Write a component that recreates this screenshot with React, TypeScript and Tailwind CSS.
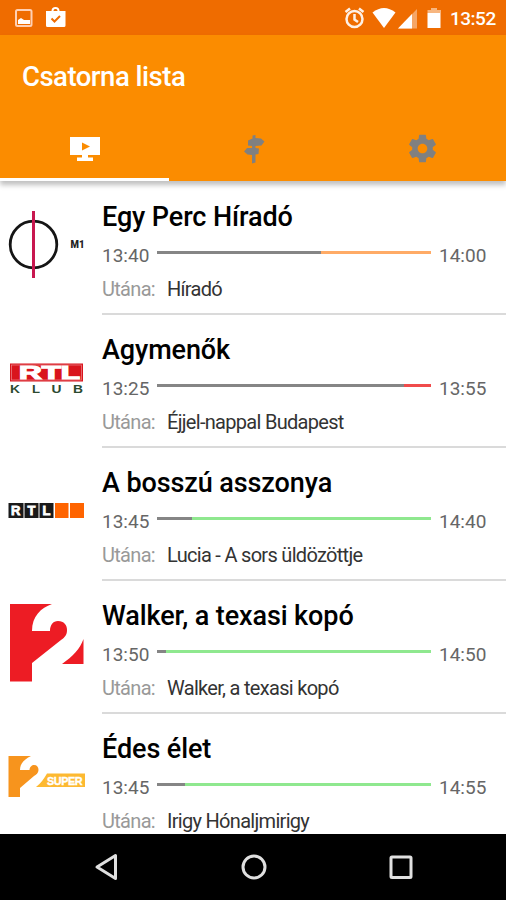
type Channel = {
  logo: () => React.ReactElement;
  title: string;
  start: string;
  end: string;
  next: string;
  progress: number;
  color: string;
};

const M1Logo = () => (
  <svg width="78" height="84" viewBox="0 0 78 84">
    <circle cx="25.5" cy="41.5" r="23.3" fill="none" stroke="#151515" strokeWidth="2.8" />
    <rect x="24" y="8" width="3" height="67" fill="#c8174f" />
    <text x="62.5" y="45" fontSize="10" fontWeight="900" textLength="14" lengthAdjust="spacingAndGlyphs" fill="#222">
      M1
    </text>
  </svg>
);

const RtlKlubLogo = () => (
  <svg width="78" height="84" viewBox="0 0 78 84" fontFamily="Liberation Sans, sans-serif" fontWeight="700">
    <rect x="2" y="27.5" width="73" height="18" fill="#d9141c" />
    <rect x="3.5" y="29" width="70" height="15" fill="none" stroke="#fff" strokeOpacity="0.5" strokeWidth="0.7" />
    <text x="11" y="43" fontSize="17.5" stroke="#fff" strokeWidth="1.2" fill="#fff" textLength="61" lengthAdjust="spacingAndGlyphs">
      RTL
    </text>
    <g fill="#2c4a30" fontSize="10">
      <text x="2" y="56.5" textLength="10" lengthAdjust="spacingAndGlyphs">K</text>
      <text x="24" y="56.5" textLength="8" lengthAdjust="spacingAndGlyphs">L</text>
      <text x="43.5" y="56.5" textLength="10" lengthAdjust="spacingAndGlyphs">U</text>
      <text x="65" y="56.5" textLength="10" lengthAdjust="spacingAndGlyphs">B</text>
    </g>
  </svg>
);

const Rtl2Logo = () => (
  <svg width="78" height="84" viewBox="0 0 78 84" fontFamily="Liberation Sans, sans-serif" fontWeight="700">
    <g fill="#1a1a1a">
      <rect x="0.5" y="34" width="15" height="15" />
      <rect x="16.5" y="34" width="14" height="15" />
      <rect x="31.5" y="34" width="14" height="15" />
    </g>
    <rect x="47" y="34" width="13.5" height="15" fill="#ff6400" />
    <rect x="62" y="34" width="14" height="15" fill="#ff6400" />
    <g fill="#fff" stroke="#fff" strokeWidth="0.8" fontSize="13">
      <text x="3" y="46">R</text>
      <text x="19.5" y="46">T</text>
      <text x="34.5" y="46">L</text>
    </g>
  </svg>
);

const Tv2Logo = () => (
  <svg width="78" height="84" viewBox="0 0 78 84" fill="#ed1c24">
    <path d="M2 2H44C33 6 24 14 24 29H42C42 23 45 19 50 19C56 19 59 23 59 28C59 33 57 35 53 38L24 61V79.500H2Z" />
    <path d="M75.500 37V62H54C65 54 72 47 75.500 37Z" />
  </svg>
);

const SuperTv2Logo = () => (
  <svg className="overflow-visible" width="78" height="84" viewBox="0 0 78 84" fontFamily="Liberation Sans, sans-serif" fontWeight="700">
    <path
      fill="#f7941d"
      d="M0.500 21H23C17 24 12 28 12 35H21.500C21.500 32 24 30 26 30C29 30 30.500 32 30.500 35C30.500 38 28 40 26 41L12 53V62H0.500Z"
    />
    <path fill="#fdb931" d="M39 38.500H77V52H28C33 48 36 44 39 38.500Z" />
    <text x="39" y="49.500" fontSize="10.800" fill="#fff" stroke="#fff" strokeWidth="0.400" letterSpacing="-0.400">
      SUPER
    </text>
  </svg>
);

const channels: Channel[] = [
  { logo: M1Logo, title: "Egy Perc Híradó", start: "13:40", end: "14:00", next: "Híradó", progress: 60, color: "#ffab66" },
  { logo: RtlKlubLogo, title: "Agymenők", start: "13:25", end: "13:55", next: "Éjjel-nappal Budapest", progress: 90, color: "#f04b4b" },
  { logo: Rtl2Logo, title: "A bosszú asszonya", start: "13:45", end: "14:40", next: "Lucia - A sors üldözöttje", progress: 12.8, color: "#8fe88f" },
  { logo: Tv2Logo, title: "Walker, a texasi kopó", start: "13:50", end: "14:50", next: "Walker, a texasi kopó", progress: 3.4, color: "#8fe88f" },
  { logo: SuperTv2Logo, title: "Édes élet", start: "13:45", end: "14:55", next: "Irigy Hónaljmirigy", progress: 10.2, color: "#8fe88f" },
];

const StatusBar = () => (
  <div className="flex h-[35px] shrink-0 items-center bg-[#ef6c00] text-white">
    <svg width="72" height="35" viewBox="0 0 72 35">
      <rect x="16" y="10" width="15.500" height="16" rx="1.500" fill="none" stroke="#ffd0b4" strokeWidth="2" />
      <path d="M18 24V20L21 18L24 20H30V24Z" fill="#fff" />
      <path d="M46 11H51.500C51.500 8.500 53 7 55.500 7S59.500 8.500 59.500 11H65.500V25.500Q65.500 27 64 27H47.500Q46 27 46 25.500Z" fill="#fff" />
      <path d="M53.500 11C53.500 9.500 54.500 9 55.500 9S57.500 9.500 57.500 11Z" fill="#ef6c00" />
      <path d="M51.500 18.500L54.500 21.500L60 16" fill="none" stroke="#ef6c00" strokeWidth="2" />
    </svg>
    <svg className="ml-auto" width="104" height="35" viewBox="0 0 104 35">
      <g fill="none" stroke="#fff" strokeOpacity="0.9" strokeWidth="2.500">
        <circle cx="16.500" cy="19" r="8" />
        <path d="M16.500 14V19.500L20 22M7.500 12L12 8.500M25.500 12L21 8.500" />
      </g>
      <path d="M34.500 12.500Q46 3.500 57.500 12.500L46 28Z" fill="#fff" />
      <path d="M79 9V28.500H60Z" fill="#fff" fillOpacity="0.4" />
      <path d="M74 14V28.500H60Z" fill="#fff" />
      <path d="M93 8H99V10H103V13H89.500V10H93Z" fill="#fff" fillOpacity="0.5" />
      <rect x="89.500" y="13" width="13" height="15" fill="#fff" />
    </svg>
    <span className="mr-2.5 ml-2 w-[46px] pt-0.5 text-[19px] leading-[37px] font-medium tracking-[-0.5px] whitespace-nowrap">13:52</span>
  </div>
);

const Tabs = () => (
  <div className="grid h-[62px] grid-cols-3">
    <div className="flex items-center justify-center border-b-[3px] border-white pl-px">
      <svg width="32" height="24" viewBox="0 0 32 24" fill="#fff">
        <path d="M1 0H31V18H19V20.500H24V24H8V20.500H13V18H1Z" />
        <path d="M13 5.500L21 9.500L13 13.500Z" fill="#fb8c00" />
      </svg>
    </div>
    <div className="flex items-center justify-center border-b-[3px] border-transparent pl-0.5">
      <svg width="22" height="30" viewBox="0 0 22 30" fill="#808080">
        <path d="M9.500 1.500L12.500 1V4L18 4.500L21.500 7.500L18.500 11.500L12.500 12V14L16 14.500L15.500 20L12.500 20.500V28.500L9 29.500V21L4.500 20.500L1 17.500L4 14H9V12L5 11.500V6.500L9.500 4.500Z" />
      </svg>
    </div>
    <div className="flex items-center justify-center border-b-[3px] border-transparent pl-0.5">
      <svg width="33" height="33" viewBox="0 0 24 24" fill="#808080">
        <path d="M19.430 12.980c.04-.32.07-.64.07-.98s-.03-.66-.07-.98l2.110-1.650c.19-.15.24-.42.12-.64l-2-3.460c-.12-.22-.39-.3-.61-.22l-2.490 1c-.52-.4-1.080-.73-1.690-.98l-.38-2.650C14.460 2.180 14.250 2 14 2h-4c-.25 0-.46.18-.49.42l-.38 2.650c-.61.25-1.170.59-1.690.98l-2.490-1c-.23-.09-.49 0-.61.22l-2 3.460c-.13.22-.07.49.12.64l2.110 1.650c-.04.32-.07.65-.07.98s.03.66.07.98l-2.110 1.650c-.19.15-.24.42-.12.64l2 3.460c.12.22.39.3.61.22l2.490-1c.52.4 1.080.73 1.690.98l.38 2.650c.03.24.24.42.49.42h4c.25 0 .46-.18.49-.42l.38-2.650c.61-.25 1.170-.59 1.690-.98l2.490 1c.23.09.49 0 .61-.22l2-3.460c.12-.22.07-.49-.12-.64l-2.110-1.650zM12 15.500c-1.930 0-3.500-1.570-3.500-3.500s1.570-3.500 3.500-3.500 3.500 1.570 3.500 3.500-1.570 3.500-3.500 3.500z" />
      </svg>
    </div>
  </div>
);

const ChannelRow = ({ channel }: { channel: Channel }) => {
  const Logo = channel.logo;
  return (
    <div className="flex h-[133px] shrink-0 pl-2">
      <div className="w-[94px] shrink-0 pt-[21px]">
        <Logo />
      </div>
      <div className="flex flex-1 flex-col border-b-2 border-[#dadada] pt-[17px]">
        <h2 className="text-[27px] leading-9 font-medium tracking-[-0.1px] whitespace-nowrap text-black">{channel.title}</h2>
        <div className="flex h-10 items-center pr-5 text-[19px] text-[#666]">
          <span className="w-[47px] pt-0.5">{channel.start}</span>
          <div className="mr-2 mb-[5px] ml-2 flex h-[3px] flex-1">
            <div className="bg-[#858585]" style={{ width: `${channel.progress}%` }}></div>
            <div className="flex-1" style={{ backgroundColor: channel.color }}></div>
          </div>
          <span className="w-[47px] pt-0.5">{channel.end}</span>
        </div>
        <p className="flex text-[20px] leading-7 tracking-[-0.7px] whitespace-nowrap text-[#333]">
          <span className="w-[65px] text-[#999]">Utána:</span>
          <span>{channel.next}</span>
        </p>
      </div>
    </div>
  );
};

const NavigationBar = () => (
  <div className="flex h-[66px] shrink-0 items-center justify-center gap-[119px] bg-black pl-0.5">
    <svg width="28" height="30" viewBox="0 0 28 30">
      <path d="M4 15L22.500 3.500V26.500Z" fill="none" stroke="#e0e0e0" strokeWidth="3" strokeLinejoin="round" />
    </svg>
    <svg width="28" height="30" viewBox="0 0 28 30">
      <circle cx="14" cy="15" r="11" fill="none" stroke="#e0e0e0" strokeWidth="3" />
    </svg>
    <svg width="28" height="30" viewBox="0 0 28 30">
      <rect x="4" y="5" width="20" height="20.500" rx="1" fill="none" stroke="#e0e0e0" strokeWidth="3" />
    </svg>
  </div>
);

const App = () => {
  return (
    <main className="flex h-[900px] w-[506px] flex-col overflow-hidden bg-white font-[Roboto,sans-serif]">
      <StatusBar />
      <header className="z-10 h-[146px] shrink-0 bg-[#fb8c00] shadow-[0_4px_5px_rgba(0,0,0,0.25)]">
        <h1 className="h-[84px] pl-[22px] text-[27.5px] leading-[84px] font-medium tracking-[-0.5px] text-white">Csatorna lista</h1>
        <Tabs />
      </header>
      <section className="flex min-h-0 flex-1 flex-col overflow-hidden pt-px">
        {channels.map((channel) => (
          <ChannelRow key={channel.title} channel={channel} />
        ))}
      </section>
      <NavigationBar />
    </main>
  );
};

export default App;
